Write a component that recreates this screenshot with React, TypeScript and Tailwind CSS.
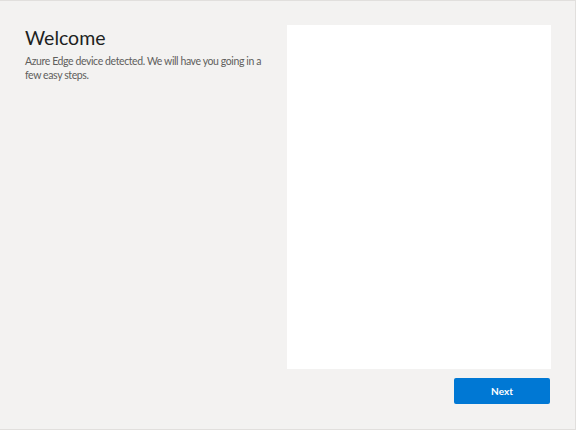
export default function App() {
  return (
    <div
      className="w-[576px] h-[430px] bg-[#f3f2f1] border-t border-r border-b border-[#e1dfdd] flex"
      style={{ fontFamily: 'Lato, "Noto Sans", sans-serif' }}
    >
      <div className="w-[287px] pl-[25px] pr-[22px] pt-[25px]">
        <h1 className="text-[19.5px] leading-[24px] text-[#201f1e] font-normal">Welcome</h1>
        <p className="mt-[5px] text-[10.5px] leading-[13.5px] tracking-[-0.4px] text-[#605e5c]">
          Azure Edge device detected. We will have you going in a few easy steps.
        </p>
      </div>
      <div className="flex flex-col pt-[24px]">
        <div className="w-[264px] h-[344px] bg-white"></div>
        <div className="flex justify-end mt-[9px] pr-[1px]">
          <button className="w-[96px] h-[26px] bg-[#0078d4] text-white text-[10px] font-bold rounded-[2px]">
            Next
          </button>
        </div>
      </div>
    </div>
  );
}
